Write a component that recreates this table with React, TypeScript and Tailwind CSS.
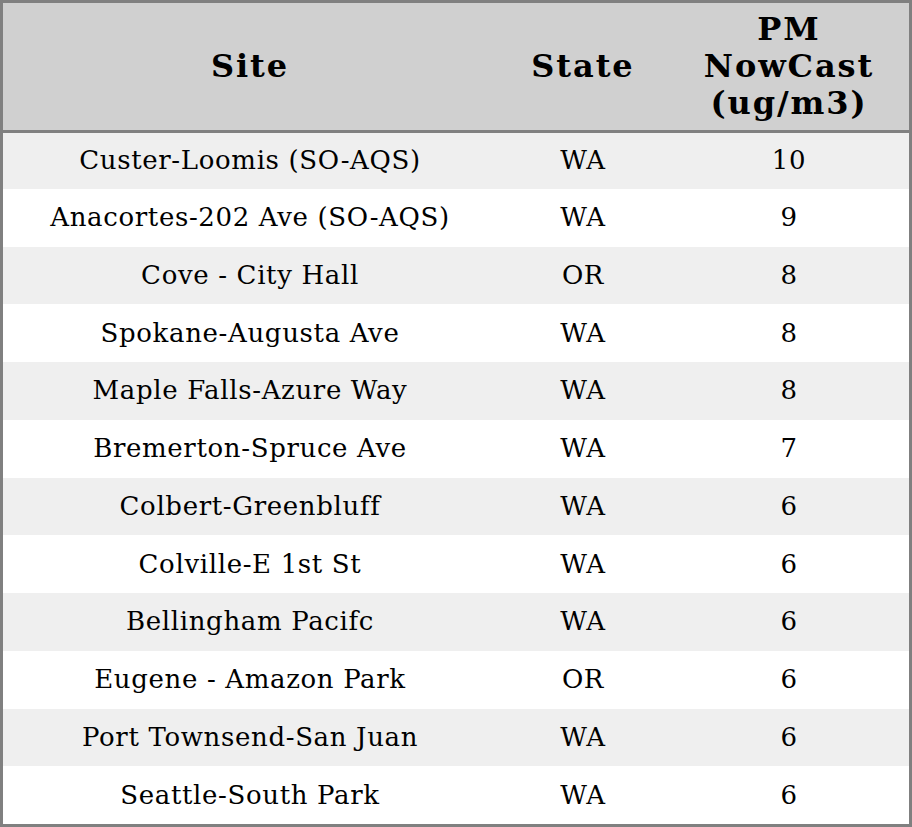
import React from "react";

const ROWS: [string, string, number][] = [
  ["Custer-Loomis (SO-AQS)", "WA", 10],
  ["Anacortes-202 Ave (SO-AQS)", "WA", 9],
  ["Cove - City Hall", "OR", 8],
  ["Spokane-Augusta Ave", "WA", 8],
  ["Maple Falls-Azure Way", "WA", 8],
  ["Bremerton-Spruce Ave", "WA", 7],
  ["Colbert-Greenbluff", "WA", 6],
  ["Colville-E 1st St", "WA", 6],
  ["Bellingham Pacifc", "WA", 6],
  ["Eugene - Amazon Park", "OR", 6],
  ["Port Townsend-San Juan", "WA", 6],
  ["Seattle-South Park", "WA", 6],
];

const App = () => {
  return (
    <div className="w-[912px] h-[827px] border-[3px] border-[#808080] bg-white font-['DejaVu_Serif',serif] text-black">
      <table className="w-full table-fixed border-collapse">
        <colgroup>
          <col className="w-[494px]" />
          <col className="w-[172px]" />
          <col className="w-[240px]" />
        </colgroup>
        <thead>
          <tr className="h-[128px] bg-[#d0d0d0] text-[32px] font-bold leading-[37px] tracking-[1.9px]">
            <th className="border-b-[3px] border-[#808080] text-center">Site</th>
            <th className="border-b-[3px] border-[#808080] text-center">State</th>
            <th className="border-b-[3px] border-[#808080] text-center">
              PM
              <br />
              NowCast
              <br />
              (ug/m3)
            </th>
          </tr>
        </thead>
        <tbody className="text-[26px] tracking-[0.65px]">
          {ROWS.map(([site, state, pm], i) => (
            <tr
              key={site}
              className={i % 2 === 0 ? "h-[57.75px] bg-[#efefef]" : "h-[57.75px] bg-white"}
            >
              <td className="text-center p-0">{site}</td>
              <td className="text-center p-0">{state}</td>
              <td className="text-center p-0">{pm}</td>
            </tr>
          ))}
        </tbody>
      </table>
    </div>
  );
};

export default App;
